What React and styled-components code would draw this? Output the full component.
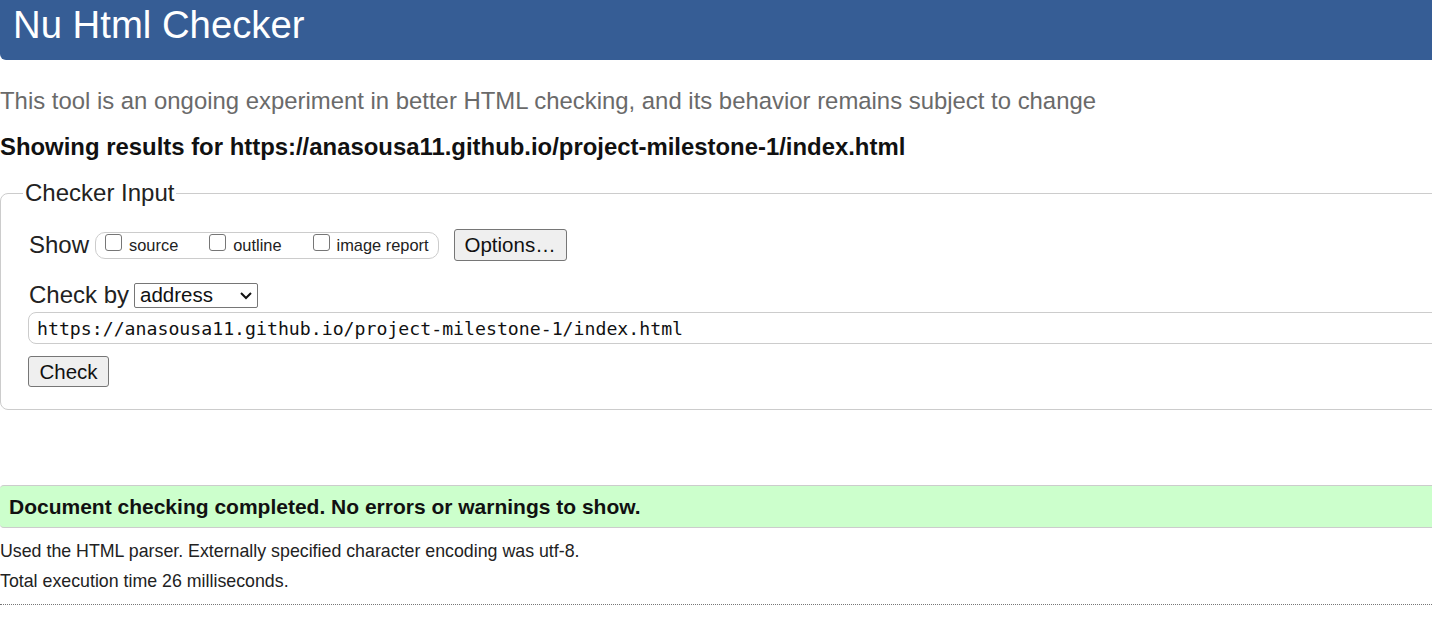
import React from "react";
import styled, { createGlobalStyle } from "styled-components";

const Global = createGlobalStyle`
  html, body { margin: 0; padding: 0; background: #fff; }
  body {
    font-family: "Liberation Sans", Arial, sans-serif;
    color: #222;
    overflow: hidden;
  }
`;

const Page = styled.div`
  width: 1432px;
  overflow: hidden;
`;

const Header = styled.h1`
  margin: 0;
  height: 60px;
  line-height: 50px;
  padding-left: 13px;
  background: #365d95;
  color: #fff;
  font-weight: normal;
  font-size: 38.3px;
  border-bottom-left-radius: 6px;
`;

const Tagline = styled.p`
  margin: 28px 0 0;
  font-size: 23.9px;
  line-height: 26px;
  color: #6a6a6a;
`;

const ResultsFor = styled.h2`
  margin: 20px 0 0;
  font-size: 23.9px;
  line-height: 26px;
  font-weight: bold;
  color: #111;
`;

const Fieldset = styled.fieldset`
  margin: 20px -40px 0 0;
  padding: 0 0 22px 28px;
  border: 1px solid #ccc;
  border-radius: 8px;
  min-width: 0;
`;

const Legend = styled.legend`
  margin-left: -6px;
  padding: 0 2px;
  font-size: 24px;
  line-height: 26px;
  color: #222;
`;

const Row = styled.div`
  display: flex;
  align-items: center;
  margin-top: ${(p) => p.$mt || 0}px;
`;

const Label = styled.span`
  font-size: 24px;
  line-height: 26px;
  margin-right: ${(p) => p.$mr || 5}px;
`;

const Pill = styled.div`
  display: flex;
  align-items: center;
  height: 25px;
  padding: 0 9px 0 9px;
  border: 1px solid #ccc;
  border-radius: 10px;
`;

const Opt = styled.label`
  display: flex;
  align-items: center;
  margin-right: ${(p) => p.$mr || 0}px;
  font-size: 16.4px;
  color: #222;
`;

const Box = styled.span`
  width: 15px;
  height: 15px;
  border: 1px solid #767676;
  border-radius: 3px;
  background: #fff;
  margin-right: 7px;
  position: relative;
  top: -3px;
`;

const Button = styled.button`
  font-family: "Liberation Sans", Arial, sans-serif;
  font-size: 20.5px;
  color: #111;
  background: #efefef;
  border: 1px solid #767676;
  border-radius: 3px;
  height: ${(p) => p.$h}px;
  width: ${(p) => p.$w}px;
  margin-left: ${(p) => p.$ml || 0}px;
  padding: 0;
`;

const Select = styled.div`
  display: flex;
  align-items: center;
  justify-content: space-between;
  box-sizing: border-box;
  width: 124px;
  height: 25px;
  border: 1px solid #767676;
  border-radius: 2px;
  padding: 0 4px 0 5px;
  font-size: 20.5px;
  color: #111;
`;

const UrlInput = styled.div`
  margin-top: 4px;
  margin-left: -1px;
  height: 30px;
  border: 1px solid #ccc;
  border-radius: 8px;
  display: flex;
  align-items: center;
  padding-left: 8px;
  font-family: "DejaVu Sans Mono", "Liberation Mono", monospace;
  font-size: 18.2px;
  color: #111;
`;

const CheckRow = styled.div`
  margin-top: 12px;
  margin-left: -1px;
`;

const Success = styled.div`
  margin-top: 75px;
  height: 41px;
  border-top: 1px solid #ccc;
  border-bottom: 1px solid #ccc;
  border-radius: 4px 0 0 4px;
  background: #ccffcc;
  display: flex;
  align-items: center;
  padding-left: 9px;
  font-weight: bold;
  font-size: 21px;
  color: #111;
`;

const Info = styled.p`
  margin: ${(p) => p.$mt}px 0 0;
  font-size: 17.8px;
  line-height: 20px;
  color: #222;
`;

const Dotted = styled.hr`
  margin: 13px 0 0;
  border: 0;
  border-top: 1px dotted #777;
  height: 0;
`;

function Chevron() {
  return (
    <svg width="14" height="14" viewBox="0 0 14 14">
      <path d="M2 5 L7 10 L12 5" fill="none" stroke="#111" strokeWidth="2" />
    </svg>
  );
}

export default function App() {
  return (
    <Page>
      <Global />
      <Header>Nu Html Checker</Header>
      <Tagline>
        This tool is an ongoing experiment in better HTML checking, and its behavior remains subject to change
      </Tagline>
      <ResultsFor>Showing results for https://anasousa11.github.io/project-milestone-1/index.html</ResultsFor>
      <Fieldset>
        <Legend>Checker Input</Legend>
        <Row $mt={23}>
          <Label $mr={6}>Show</Label>
          <Pill>
            <Opt $mr={31}><Box />source</Opt>
            <Opt $mr={31}><Box />outline</Opt>
            <Opt><Box />image report</Opt>
          </Pill>
          <Button $w={113} $h={32} $ml={15}>Options…</Button>
        </Row>
        <Row $mt={21}>
          <Label>Check by</Label>
          <Select>
            <span>address</span>
            <Chevron />
          </Select>
        </Row>
        <UrlInput>https://anasousa11.github.io/project-milestone-1/index.html</UrlInput>
        <CheckRow>
          <Button $w={81} $h={31}>Check</Button>
        </CheckRow>
      </Fieldset>
      <Success>Document checking completed. No errors or warnings to show.</Success>
      <Info $mt={13}>Used the HTML parser. Externally specified character encoding was utf-8.</Info>
      <Info $mt={10}>Total execution time 26 milliseconds.</Info>
      <Dotted />
    </Page>
  );
}
